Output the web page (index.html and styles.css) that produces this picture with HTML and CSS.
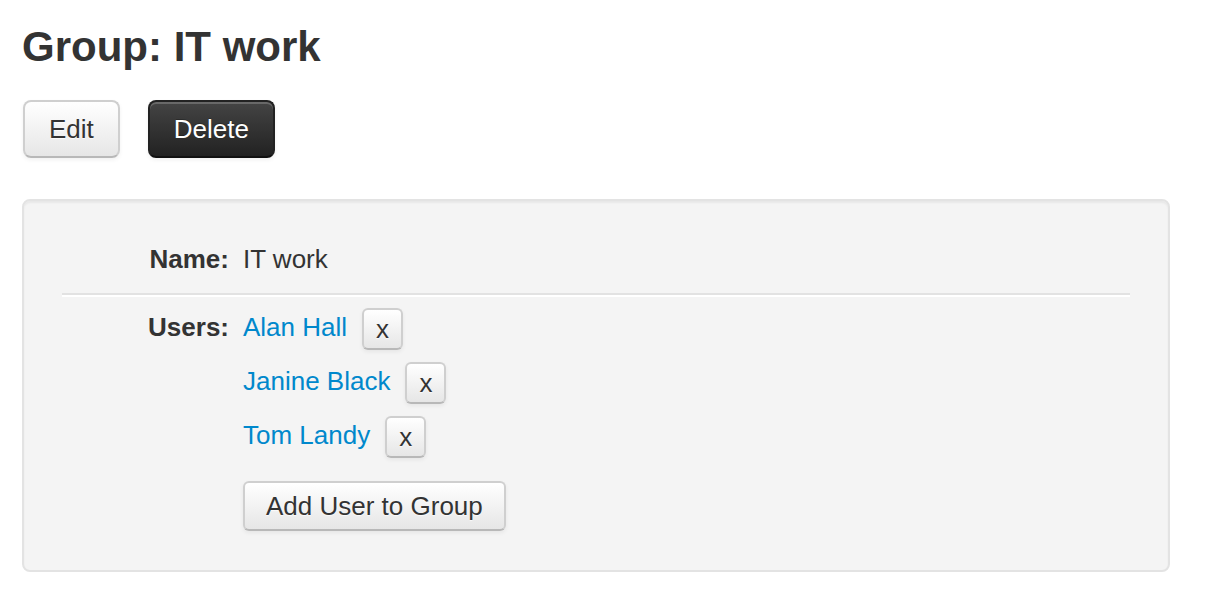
FILE: index.html
```html
<!DOCTYPE html>
<html>
<head>
<meta charset="utf-8">
<title>Group: IT work</title>
<link rel="stylesheet" href="styles.css">
</head>
<body>
<div class="page">
  <h2 class="title">Group: IT work</h2>
  <div class="actions">
    <button class="btn">Edit</button>
    <button class="btn btn-inverse">Delete</button>
  </div>
  <div class="well">
    <div class="field">
      <div class="label">Name:</div>
      <div class="value">IT work</div>
    </div>
    <hr class="divider">
    <div class="field">
      <div class="label">Users:</div>
      <div class="value">
        <div class="user"><a href="#" class="link">Alan Hall</a><button class="btn btn-x">x</button></div>
        <div class="user"><a href="#" class="link">Janine Black</a><button class="btn btn-x">x</button></div>
        <div class="user"><a href="#" class="link">Tom Landy</a><button class="btn btn-x">x</button></div>
        <button class="btn btn-add">Add User to Group</button>
      </div>
    </div>
  </div>
</div>
</body>
</html>
```

FILE: styles.css
```css
html, body {
  margin: 0;
  padding: 0;
  background: #ffffff;
}
body {
  font-family: "Liberation Sans", Arial, "Helvetica Neue", Helvetica, sans-serif;
  font-size: 26px;
  line-height: 36px;
  color: #333333;
}
.page {
  padding: 0 22px;
  width: 1148px;
}
.title {
  margin: 22px 0 28px;
  font-size: 42px;
  line-height: 50px;
  font-weight: bold;
  color: #333333;
}
.actions {
  display: flex;
  gap: 28px;
  padding-left: 1px;
  margin-bottom: 41px;
}
.btn {
  font-family: inherit;
  font-size: 26px;
  line-height: 36px;
  color: #333333;
  padding: 9px 24px;
  border: 2px solid #cfcfcf;
  border-bottom-color: #b8b8b8;
  border-radius: 8px;
  background: linear-gradient(to bottom, #ffffff, #e6e6e6);
  box-shadow: inset 0 2px 0 rgba(255,255,255,0.2), 0 2px 4px rgba(0,0,0,0.06);
  cursor: pointer;
  text-shadow: 0 1px 1px rgba(255,255,255,0.75);
}
.btn-inverse {
  color: #ffffff;
  background: linear-gradient(to bottom, #444444, #222222);
  border-color: #222222;
  border-bottom-color: #111111;
  text-shadow: 0 -1px 0 rgba(0,0,0,0.25);
}
.well {
  box-sizing: border-box;
  width: 1148px;
  background: #f4f4f4;
  border: 2px solid #e3e3e3;
  border-radius: 8px;
  box-shadow: inset 0 2px 2px rgba(0,0,0,0.05);
  padding: 40px 38px 39px;
}
.field {
  display: grid;
  grid-template-columns: 167px 1fr;
  column-gap: 14px;
  align-items: baseline;
}
.label {
  font-weight: bold;
  text-align: right;
}
.divider {
  margin: 16px 0 11px;
  border: 0;
  border-top: 2px solid #e2e2e2;
  border-bottom: 2px solid #ffffff;
  height: 0;
}
.value {
  display: flex;
  flex-direction: column;
  align-items: flex-start;
}
.user {
  display: flex;
  align-items: flex-start;
  gap: 15px;
  margin-bottom: 12px;
}
.link {
  color: #0088cc;
  text-decoration: none;
  margin-top: 1px;
}
.btn-x {
  padding: 6px 12px;
  line-height: 26px;
  border-radius: 6px;
}
.btn-add {
  margin-top: 11px;
  padding: 5px 21px;
  border-radius: 6px;
}
```
